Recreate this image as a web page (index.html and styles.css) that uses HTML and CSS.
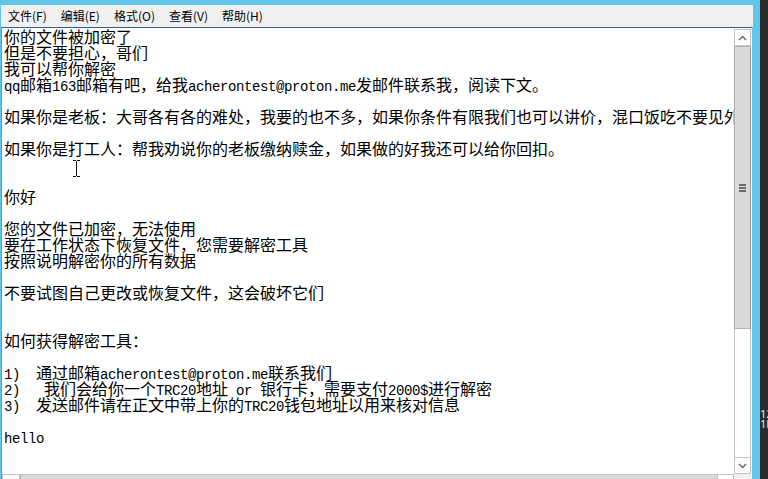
FILE: index.html
```html
<!DOCTYPE html>
<html lang="zh-CN">
<head>
    <meta charset="UTF-8">
    <meta name="viewport" content="width=device-width, initial-scale=1.0">
    <title>readme.txt - 记事本</title>
    <link rel="stylesheet" href="styles.css">
</head>
<body>
    <div class="screen">
        <div class="window">
            <div class="menubar">
                <span class="menu-item">文件(F)</span>
                <span class="menu-item">编辑(E)</span>
                <span class="menu-item">格式(O)</span>
                <span class="menu-item">查看(V)</span>
                <span class="menu-item">帮助(H)</span>
            </div>

            <div class="edit">
                <div class="text">
                    <div class="line">你的文件被加密了</div>
                    <div class="line">但是不要担心，哥们</div>
                    <div class="line">我可以帮你解密</div>
                    <div class="line"><span class="a">qq</span>邮箱<span class="a">163</span>邮箱有吧，给我<span class="a">acherontest@proton.me</span>发邮件联系我，阅读下文。</div>
                    <div class="line"></div>
                    <div class="line">如果你是老板：大哥各有各的难处，我要的也不多，如果你条件有限我们也可以讲价，混口饭吃不要见外。</div>
                    <div class="line"></div>
                    <div class="line">如果你是打工人：帮我劝说你的老板缴纳赎金，如果做的好我还可以给你回扣。</div>
                    <div class="line"></div>
                    <div class="line"></div>
                    <div class="line">你好</div>
                    <div class="line"></div>
                    <div class="line">您的文件已加密，无法使用</div>
                    <div class="line">要在工作状态下恢复文件，您需要解密工具</div>
                    <div class="line">按照说明解密你的所有数据</div>
                    <div class="line"></div>
                    <div class="line">不要试图自己更改或恢复文件，这会破坏它们</div>
                    <div class="line"></div>
                    <div class="line"></div>
                    <div class="line">如何获得解密工具：</div>
                    <div class="line"></div>
                    <div class="line"><span class="a">1)  </span>通过邮箱<span class="a">acherontest@proton.me</span>联系我们</div>
                    <div class="line"><span class="a">2)   </span>我们会给你一个<span class="a">TRC20</span>地址<span class="a"> or </span>银行卡，需要支付<span class="a">2000$</span>进行解密</div>
                    <div class="line"><span class="a">3)  </span>发送邮件请在正文中带上你的<span class="a">TRC20</span>钱包地址以用来核对信息</div>
                    <div class="line"></div>
                    <div class="line"><span class="a">hello</span></div>
                </div>

                <div class="vscroll">
                    <div class="sb-btn">
                        <svg width="9" height="6" viewBox="0 0 9 6"><polyline points="1,5 4.5,1.5 8,5" fill="none" stroke="#606060" stroke-width="1.3"/></svg>
                    </div>
                    <div class="thumb">
                        <svg width="7" height="8" viewBox="0 0 7 8"><rect x="0" y="0" width="7" height="2" fill="#6b6b6b"/><rect x="0" y="3" width="7" height="2" fill="#6b6b6b"/><rect x="0" y="6" width="7" height="2" fill="#6b6b6b"/></svg>
                    </div>
                    <div class="track"></div>
                    <div class="sb-btn">
                        <svg width="9" height="6" viewBox="0 0 9 6"><polyline points="1,1 4.5,4.5 8,1" fill="none" stroke="#606060" stroke-width="1.3"/></svg>
                    </div>
                </div>

                <div class="hscroll">
                    <div class="sb-btn hbtn"></div>
                    <div class="hthumb"></div>
                    <div class="sb-btn hbtn"></div>
                </div>
                <div class="corner"></div>
            </div>
        </div>

        <div class="desktop">
            <span>12</span>
            <span>1E</span>
        </div>

        <svg class="ibeam" width="9" height="17" viewBox="0 0 9 17">
            <path d="M1 0.5H4M5 0.5H8M4.5 1V16M1 16.5H4M5 16.5H8" fill="none" stroke="#111" stroke-width="1"/>
        </svg>
    </div>
</body>
</html>
```

FILE: styles.css
```css
* {
    margin: 0;
    padding: 0;
    box-sizing: border-box;
}
body {
    background-color: #2b2b2b;
    overflow: hidden;
}
.screen {
    position: relative;
    display: flex;
    width: 768px;
    height: 479px;
    overflow: hidden;
}
.window {
    flex: none;
    display: flex;
    flex-direction: column;
    width: 760px;
    height: 500px;
    padding: 5px 8px 0 1px;
    background-color: #62c6ea;
}
.menubar {
    display: flex;
    align-items: center;
    height: 22px;
    margin-right: -1px;
    background-color: #f0f0f0;
    font-family: "Noto Sans CJK SC", sans-serif;
    font-size: 12px;
    color: #000;
}
.menu-item {
    padding: 0 7px;
    line-height: 20px;
}
.edit {
    display: grid;
    grid-template-columns: 1fr 18px;
    grid-template-rows: 446px 17px;
    border-top: 1px solid #335f89;
    border-left: 1px solid #4a9fd2;
    background-color: white;
}
.text {
    padding-left: 2px;
    overflow: hidden;
    font-family: "Noto Sans CJK SC", sans-serif;
    font-size: 16px;
    line-height: 16px;
    color: #000;
}
.line {
    height: 16px;
    white-space: pre;
}
.a {
    font-family: "Liberation Mono", monospace;
    font-size: 14px;
    letter-spacing: -0.4px;
}
.vscroll {
    display: flex;
    flex-direction: column;
    padding: 1px 1px 0 0;
    background-color: white;
}
.sb-btn {
    flex: none;
    display: flex;
    align-items: center;
    justify-content: center;
    height: 17px;
    border: 1px solid #c4c4c4;
    background-color: white;
}
.thumb {
    flex: none;
    display: flex;
    align-items: center;
    justify-content: center;
    height: 283px;
    border: 1px solid #b2b2b2;
    border-right-color: #9e9e9e;
    background-color: #dadada;
}
.track {
    flex: 1;
    border-left: 1px solid #c4c4c4;
    border-right: 1px solid #c4c4c4;
}
.hscroll {
    display: flex;
    border-top: 1px solid #c4c4c4;
}
.hbtn {
    width: 17px;
    border-top: none;
}
.hbtn:first-child {
    width: 18px;
}
.hthumb {
    flex: 1;
    background-color: #dadada;
    border-left: 1px solid #b2b2b2;
}
.corner {
    background-color: #f0f0f0;
}
.desktop {
    flex: none;
    display: flex;
    flex-direction: column;
    width: 8px;
    padding-top: 409px;
    overflow: hidden;
    font-family: "Noto Sans", sans-serif;
    font-size: 11px;
    line-height: 10px;
    color: #e8e8e8;
    white-space: nowrap;
}
.ibeam {
    position: absolute;
    left: 72px;
    top: 160px;
}
```
